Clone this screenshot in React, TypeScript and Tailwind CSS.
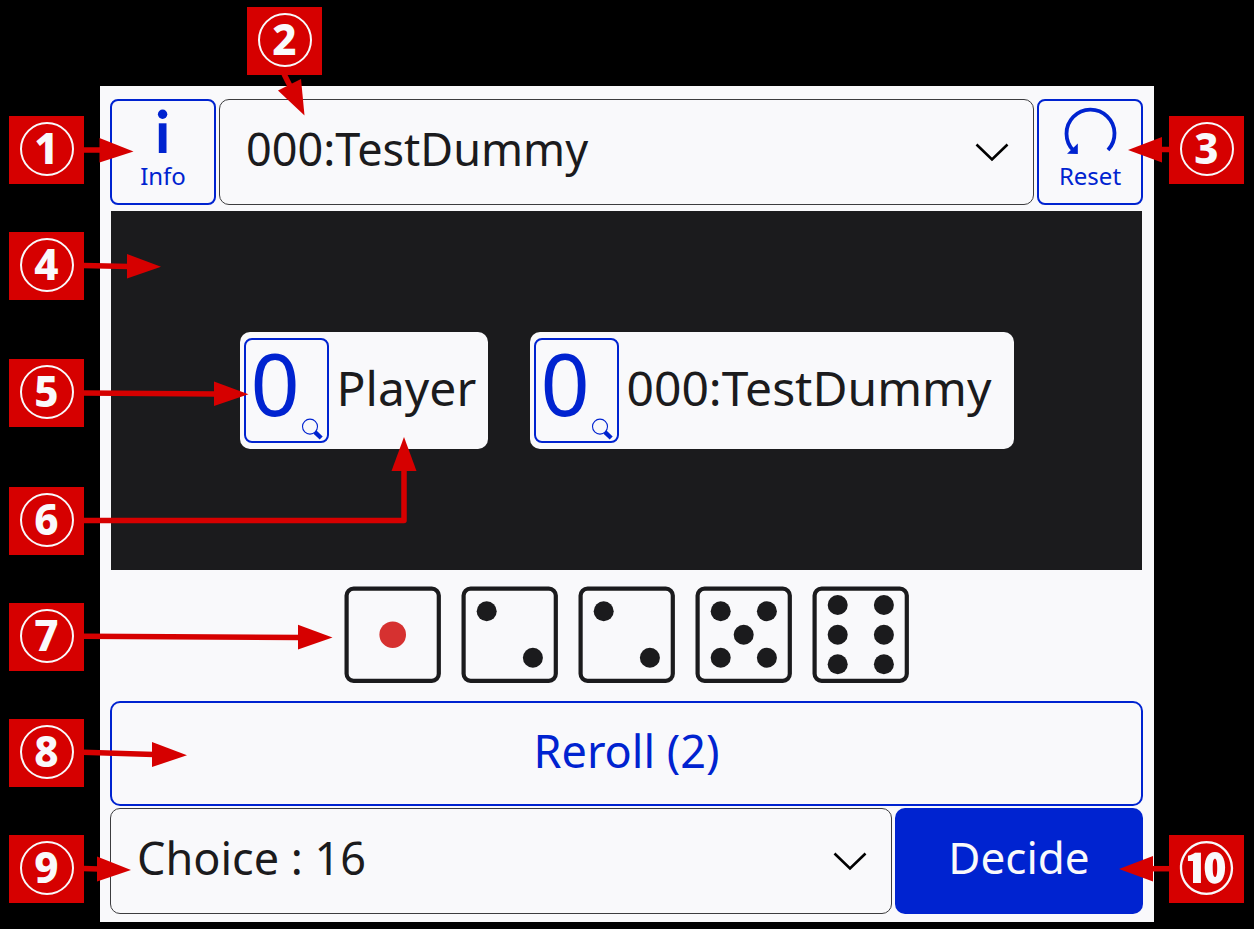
import React, { useState } from "react";

const characters = ["000:TestDummy"];
const hands = ["Choice : 16"];

const pips: Record<number, [number, number][]> = {
  1: [[48.7, 48.7]],
  2: [[25.7, 25.3], [71.9, 71.7]],
  5: [[25.7, 25.3], [71.9, 25.3], [48.7, 48.7], [25.7, 71.7], [71.9, 71.7]],
  6: [[25.7, 19], [71.9, 19], [25.7, 48.7], [71.9, 48.7], [25.7, 78.3], [71.9, 78.3]],
};

function Die({ value }: { value: number }) {
  return (
    <svg role="img" aria-label={`Die ${value}`} className="size-[97px]" viewBox="0 0 97 97">
      <rect x="2.6" y="2.6" width="92.2" height="92.2" rx="7" fill="none" stroke="#1b1b1d" strokeWidth="4.2" />
      {pips[value].map(([x, y]) => (
        <circle key={`${x}-${y}`} cx={x} cy={y} r={value === 1 ? 13.3 : 10} fill={value === 1 ? "#d63130" : "#1b1b1d"} />
      ))}
    </svg>
  );
}

function Picker({ label, options }: { label: string; options: string[] }) {
  const [value, setValue] = useState(options[0]);
  return (
    <div className="relative min-w-0 flex-1">
      <select
        aria-label={label}
        value={value}
        onChange={(e) => setValue(e.target.value)}
        className="h-[106px] w-full appearance-none rounded-[10px] border border-[#3c3c3e] bg-[#f9f9fb] pr-16 pb-[6px] pl-[26px] text-[45px] text-[#1b1b1d]"
      >
        {options.map((o) => (
          <option key={o}>{o}</option>
        ))}
      </select>
      <svg className="pointer-events-none absolute top-[43px] right-[25px] h-5 w-[34px]" viewBox="0 0 34 20" fill="none" stroke="#000" strokeWidth="2.6">
        <path d="M1.5 2.5 17 17.5 32.5 2.5" />
      </svg>
    </div>
  );
}

function Combatant({ name, score }: { name: string; score: number }) {
  return (
    <div className="flex items-center gap-2 rounded-[10px] bg-[#f9f9fb] py-[6px] pl-1">
      <button aria-label={`${name} details`} className="relative h-[105px] w-[85px] shrink-0 rounded-lg border-2 border-[#0023d0] pb-4 pl-[5px] text-left text-[86px] leading-[84px] text-[#0023d0]">
        {score}
        <svg className="absolute right-1 bottom-px size-[22px]" viewBox="0 0 22 22">
          <circle cx="9" cy="8.6" r="7.5" fill="none" stroke="#0023d0" strokeWidth="1.1" />
          <path d="M14 14.2 20.2 20" stroke="#0023d0" strokeWidth="4.4" />
        </svg>
      </button>
      <span className="pb-[6px] text-[48px] leading-[64px] text-[#1b1b1d]">{name}</span>
    </div>
  );
}

const calloutBox = "absolute flex h-[68px] w-[75px] justify-center bg-[#d60000] text-[#f9f9fb]";

function Callout({ mark, place }: { mark: string; place: string }) {
  return (
    <div className={`${calloutBox} pt-[6px] ${place}`}>
      <span className="flex size-[54px] items-center justify-center rounded-full border-2 border-[#f9f9fb] pb-[3px] text-[42px] leading-[50px] font-extrabold">
        {mark}
      </span>
    </div>
  );
}

const callouts = [
  { mark: "1", place: "left-[9px] top-[116px]" },
  { mark: "2", place: "left-[247px] top-[7px]" },
  { mark: "3", place: "right-[10px] top-[116px]" },
  { mark: "4", place: "left-[9px] top-[232px]" },
  { mark: "5", place: "left-[9px] top-[359px]" },
  { mark: "6", place: "left-[9px] top-[487px]" },
  { mark: "7", place: "left-[9px] top-[603px]" },
  { mark: "8", place: "left-[9px] top-[719px]" },
  { mark: "9", place: "left-[9px] top-[835px]" },
];

function Arrows() {
  return (
    <>
      <svg aria-hidden="true" className="pointer-events-none absolute top-0 left-0 h-[929px] w-[430px]" viewBox="0 0 430 929">
        <g fill="none" stroke="#d60000" strokeWidth="5.5">
          <path d="M83 150H101" />
          <path d="M284 74 291 88" />
          <path d="M83 265.5 129 266.5" />
          <path d="M83 393 216 394" />
          <path d="M83 520.5H404V468" strokeLinejoin="round" />
          <path d="M83 636.3 300 637.5" />
          <path d="M83 752.3 154 754.5" />
          <path d="M83 868.5 99 869" />
        </g>
        <g fill="#d60000">
          <path d="M99.5 138V162.500L133.500 151.500Z" />
          <path d="M278 90.500 301 79 304.500 115.500Z" />
          <path d="M127 254V278.500L161 266.800Z" />
          <path d="M214 381.500V406L248.500 394.300Z" />
          <path d="M391.500 471H416.500L404 437Z" />
          <path d="M298 624.700V649.500L332.500 637.500Z" />
          <path d="M152 742V767L187 755.300Z" />
          <path d="M97 856.500V881.500L131 870Z" />
        </g>
      </svg>
      <svg aria-hidden="true" className="pointer-events-none absolute top-0 right-0 h-[929px] w-[154px]" viewBox="1100 0 154 929">
        <g fill="none" stroke="#d60000" strokeWidth="5.5">
          <path d="M1160 149.500H1170" />
          <path d="M1151 868.700H1170" />
        </g>
        <g fill="#d60000">
          <path d="M1162 137V162.500L1128 150Z" />
          <path d="M1153 856V881.500L1119 869Z" />
        </g>
      </svg>
    </>
  );
}

const toolButton =
  "flex h-[106px] w-[106px] shrink-0 flex-col items-center rounded-lg border-2 border-[#0023d0] pt-1 text-[24px] leading-[30px] text-[#0023d0]";

export default function App() {
  const [rerolls, setRerolls] = useState(2);
  return (
    <div className="relative min-h-screen bg-black px-[100px] pt-[86px] pb-2 font-['Noto_Sans','Noto_Sans_CJK_JP',sans-serif]">
      <main className="bg-[#f9f9fb] pt-[13px] pr-[11px] pb-2 pl-[10px]">
        <div className="flex gap-[3px]">
          <button className={toolButton}>
            <svg className="h-[56px] w-[60px]" viewBox="0 0 60 56" fill="#0023d0">
              <circle cx="29.6" cy="9.3" r="4.7" />
              <path d="M25.800 18.300H33.500V48H25.800Z" />
            </svg>
            Info
          </button>
          <Picker label="Opponent" options={characters} />
          <button className={toolButton}>
            <svg className="h-[56px] w-[60px]" viewBox="0 0 60 56">
              <path d="M13.500 45.500A24 24 0 1 1 48 45" fill="none" stroke="#0023d0" strokeWidth="3.8" />
              <path d="M7 48.700 17.800 38.500V49Z" fill="#0023d0" />
            </svg>
            Reset
          </button>
        </div>

        <section className="mx-px mt-[6px] grid min-h-[359px] grid-cols-[248px_484px] content-center justify-center gap-[42px] bg-[#1b1b1d]">
          <Combatant name="Player" score={0} />
          <Combatant name="000:TestDummy" score={0} />
        </section>

        <div className="flex justify-center gap-5 pt-4 pb-[18px]">
          {[1, 2, 2, 5, 6].map((v, i) => (
            <Die key={i} value={v} />
          ))}
        </div>

        <button
          onClick={() => setRerolls((n) => Math.max(0, n - 1))}
          className="block h-[105px] w-full rounded-[10px] border-2 border-[#0023d0] pb-[6px] text-[45px] text-[#0023d0]"
        >
          Reroll ({rerolls})
        </button>
        <div className="mt-[2px] flex gap-[3px]">
          <Picker label="Hand" options={hands} />
          <button className="h-[106px] w-[248px] shrink-0 rounded-[10px] bg-[#0023d0] pb-2 text-[44px] text-[#f9f9fb]">Decide</button>
        </div>
      </main>

      <Arrows />
      {callouts.map((c) => (
        <Callout key={c.mark} mark={c.mark} place={c.place} />
      ))}
      <div className={`${calloutBox} top-[835px] right-[10px] items-center pb-2 font-['Noto_Sans_CJK_JP',sans-serif] text-[56px] leading-[60px] font-black`}>⑩</div>
    </div>
  );
}
